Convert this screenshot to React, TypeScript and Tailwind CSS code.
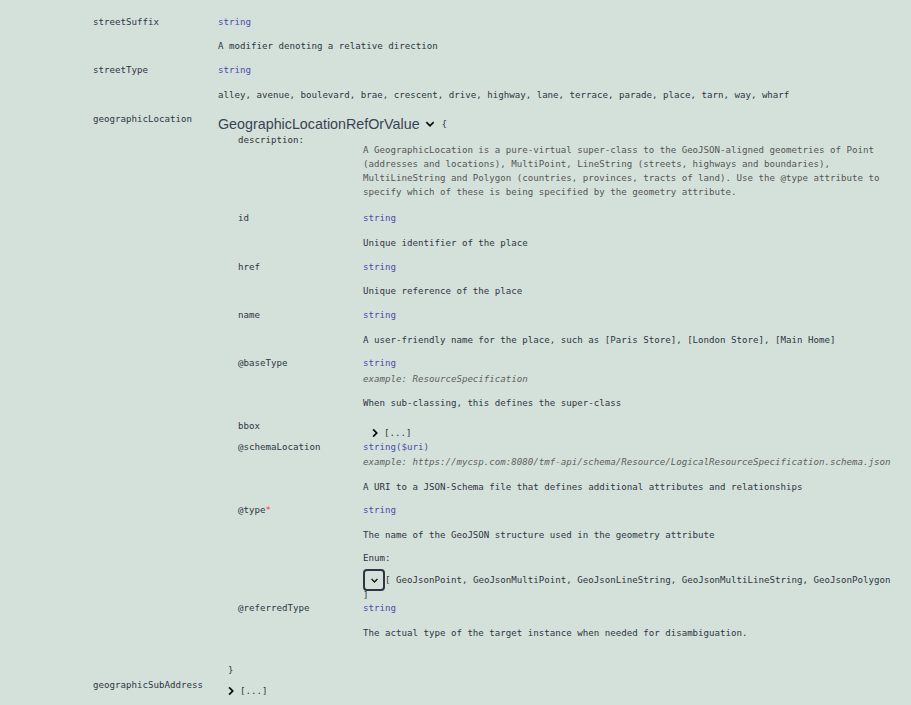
import React from "react";

const mono = "font-['DejaVu_Sans_Mono',monospace] text-[9.13px] leading-[14px]";

function Chevron({ down = false, className = "" }: { down?: boolean; className?: string }) {
  return (
    <svg
      viewBox="0 0 24 24"
      width={16}
      height={16}
      className={className}
      style={down ? { transform: "rotate(90deg)" } : undefined}
    >
      <path d="M10 6L8.59 7.41 13.17 12l-4.58 4.59L10 18l6-6z" fill="#000" stroke="#000" strokeWidth={0.6} />
    </svg>
  );
}

function Collapsed() {
  return (
    <div className="flex items-center h-[14px]">
      <Chevron className="ml-[4px] shrink-0" />
      <span className="ml-[1px] text-[#2f3442]">[...]</span>
    </div>
  );
}

function Type({ children }: { children: React.ReactNode }) {
  return <div className="text-[#4b4bab] h-[14px]">{children}</div>;
}

function Example({ children }: { children: React.ReactNode }) {
  return <div className="italic text-[#5f5f5f] h-[14px] whitespace-nowrap">{children}</div>;
}

function Text({ children, className = "" }: { children: React.ReactNode; className?: string }) {
  return <div className={"text-[#2f3442] h-[14px] whitespace-nowrap " + className}>{children}</div>;
}

function Row({
  name,
  children,
  className = "",
  nameClass = "",
}: {
  name: React.ReactNode;
  children: React.ReactNode;
  className?: string;
  nameClass?: string;
}) {
  return (
    <div className={"flex " + className}>
      <div className={"w-[125px] shrink-0 text-[#2f3442] h-[14px] whitespace-nowrap " + nameClass}>{name}</div>
      <div className="flex-1 min-w-0">{children}</div>
    </div>
  );
}

export default function App() {
  return (
    <div className={"w-[911px] h-[705px] overflow-hidden bg-[#d4e1da] " + mono}>
      <div className="pl-[93px] pt-[15px]">
        <Row name="streetSuffix">
          <Type>string</Type>
          <Text className="mt-[10px]">A modifier denoting a relative direction</Text>
        </Row>
        <Row name="streetType" className="mt-[10px]">
          <Type>string</Type>
          <Text className="mt-[11px]">
            alley, avenue, boulevard, brae, crescent, drive, highway, lane, terrace, parade, place, tarn, way, wharf
          </Text>
        </Row>
        <Row name="geographicLocation" className="mt-[10px]">
          <div className="pt-[3px] h-[21px] flex items-center">
            <span className="font-['Liberation_Sans_Narrow','Liberation_Sans',sans-serif] text-[14.3px] leading-[19px] text-[#3b4151]">
              GeographicLocationRefOrValue
            </span>
            <Chevron down className="ml-[2px] shrink-0" />
            <span className="ml-[4px] text-[#2f3442]">{"{"}</span>
          </div>
          <div className="pl-[20px]">
            <Row name="description:" nameClass="text-[#333]">
              <div className="pt-[10px] text-[#555]">
                <div className="h-[14px] whitespace-nowrap">
                  A GeographicLocation is a pure-virtual super-class to the GeoJSON-aligned geometries of Point
                </div>
                <div className="h-[14px] whitespace-nowrap">
                  (addresses and locations), MultiPoint, LineString (streets, highways and boundaries),
                </div>
                <div className="h-[14px] whitespace-nowrap">
                  MultiLineString and Polygon (countries, provinces, tracts of land). Use the @type attribute to
                </div>
                <div className="h-[14px] whitespace-nowrap">
                  specify which of these is being specified by the geometry attribute.
                </div>
              </div>
            </Row>
            <Row name="id" className="mt-[12px]">
              <Type>string</Type>
              <Text className="mt-[11px]">Unique identifier of the place</Text>
            </Row>
            <Row name="href" className="mt-[10px]">
              <Type>string</Type>
              <Text className="mt-[10px]">Unique reference of the place</Text>
            </Row>
            <Row name="name" className="mt-[10px]">
              <Type>string</Type>
              <Text className="mt-[11px]">
                A user-friendly name for the place, such as [Paris Store], [London Store], [Main Home]
              </Text>
            </Row>
            <Row name="@baseType" className="mt-[9px]">
              <Type>string</Type>
              <div className="mt-[2px]">
                <Example>example: ResourceSpecification</Example>
              </div>
              <Text className="mt-[10px]">When sub-classing, this defines the super-class</Text>
            </Row>
            <Row name="bbox" className="mt-[9px]">
              <div className="pt-[7px]">
                <Collapsed />
              </div>
            </Row>
            <Row name="@schemaLocation">
              <Type>string($uri)</Type>
              <div className="mt-[1px]">
                <Example>example: https://mycsp.com:8080/tmf-api/schema/Resource/LogicalResourceSpecification.schema.json</Example>
              </div>
              <Text className="mt-[11px]">A URI to a JSON-Schema file that defines additional attributes and relationships</Text>
            </Row>
            <Row
              name={
                <>
                  @type<span className="text-[#f93e3e]">*</span>
                </>
              }
              className="mt-[9px]"
            >
              <Type>string</Type>
              <Text className="mt-[11px]">The name of the GeoJSON structure used in the geometry attribute</Text>
              <Text className="mt-[9px]">Enum:</Text>
              <div className="mt-[4px] flex items-center h-[22px] text-[#2f3442] whitespace-nowrap">
                <div className="w-[22px] h-[22px] shrink-0 rounded-[4px] border-2 border-[#2f3442] flex items-center justify-center">
                  <Chevron down className="w-[13px] h-[13px]" />
                </div>
                <span>[ GeoJsonPoint, GeoJsonMultiPoint, GeoJsonLineString, GeoJsonMultiLineString, GeoJsonPolygon</span>
              </div>
              <Text className="-mt-[3px]">]</Text>
            </Row>
            <Row name="@referredType" className="-mt-[1px]">
              <Type>string</Type>
              <Text className="mt-[11px]">The actual type of the target instance when needed for disambiguation.</Text>
            </Row>
          </div>
          <div className="pl-[10px] mt-[23px]">
            <Text>{"}"}</Text>
          </div>
        </Row>
        <Row name="geographicSubAddress" className="mt-[1px]">
          <div className="pt-[6px]">
            <div className="ml-[1px]">
              <Collapsed />
            </div>
          </div>
        </Row>
        <Row name="@baseType" className="mt-[4px]">
          <Type>string</Type>
        </Row>
      </div>
    </div>
  );
}
